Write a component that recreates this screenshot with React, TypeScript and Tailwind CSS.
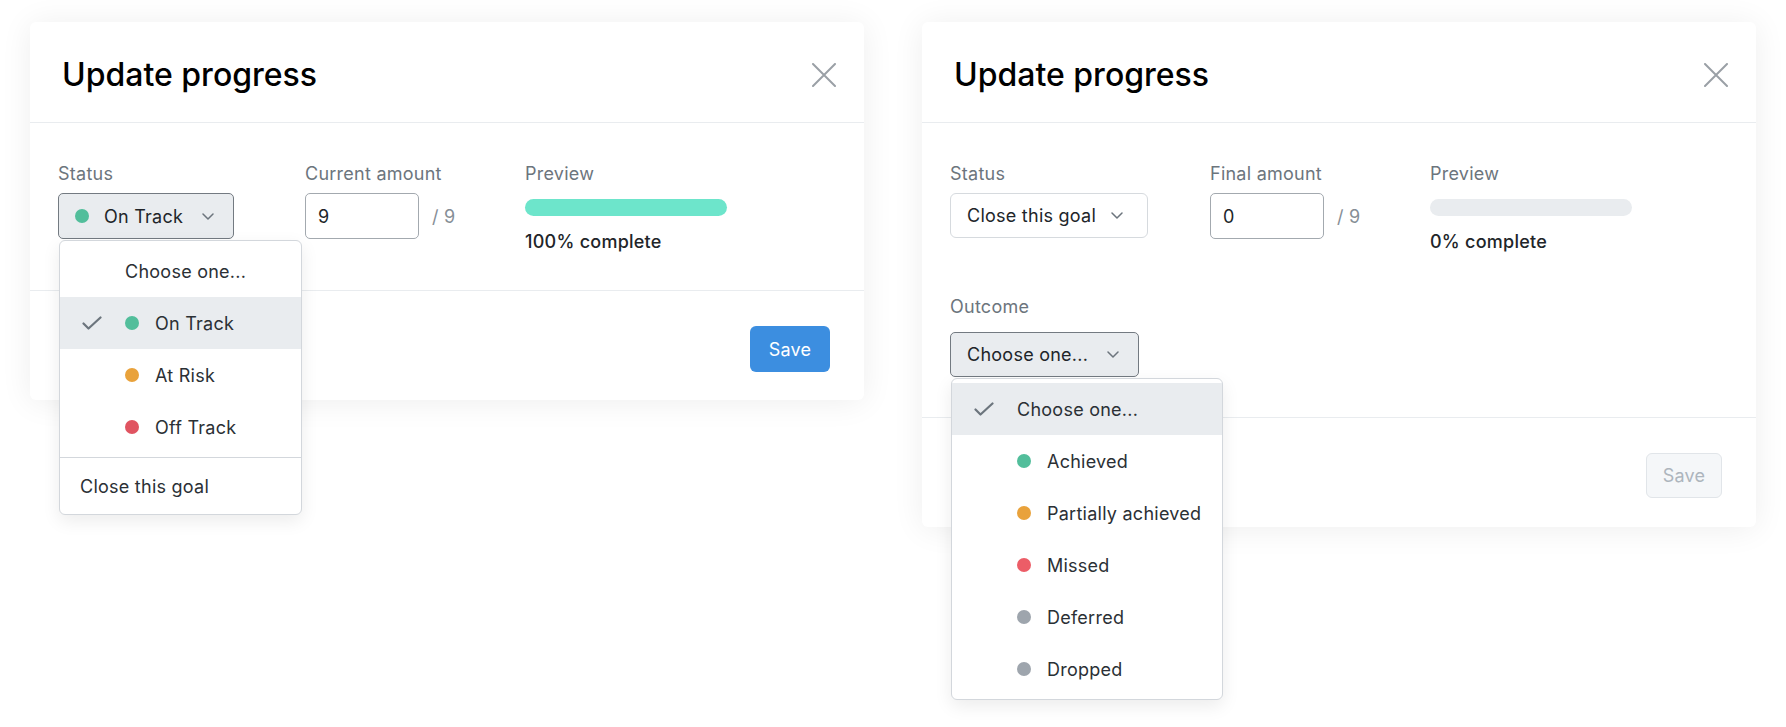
import React from 'react';

const font = { fontFamily: 'Inter, "Noto Sans", sans-serif' };

const Chevron = () => (
  <svg width="12" height="7" viewBox="0 0 12 7" fill="none">
    <path d="M1 1L6 6L11 1" stroke="#6c757d" strokeWidth="1.5" strokeLinecap="round" strokeLinejoin="round" />
  </svg>
);

const Check = () => (
  <svg width="20" height="14" viewBox="0 0 20 14" fill="none">
    <path d="M1.5 7.5L6.5 12.5L18.5 1.5" stroke="#6c757d" strokeWidth="2.2" strokeLinecap="round" strokeLinejoin="round" />
  </svg>
);

const CloseIcon = () => (
  <svg width="24" height="24" viewBox="0 0 24 24" fill="none">
    <path d="M1 1L23 23M23 1L1 23" stroke="#9aa0a6" strokeWidth="2" strokeLinecap="round" />
  </svg>
);

const Dot = ({ color }: { color: string }) => (
  <span className={`inline-block w-[14px] h-[14px] rounded-full shrink-0 ${color}`} />
);

interface ItemProps {
  label: string;
  dot?: string;
  checked?: boolean;
}

const MenuItem: React.FC<ItemProps> = ({ label, dot, checked }) => (
  <div className={`flex items-center h-[52px] ${checked ? 'bg-[#e9ecef]' : ''}`}>
    <div className="w-[65px] pl-[22px] flex items-center">{checked && <Check />}</div>
    {dot && <Dot color={dot} />}
    <span className={`text-[18px] text-[#2b3035] whitespace-nowrap ${dot ? 'ml-[16px]' : ''}`}>{label}</span>
  </div>
);

const Label = ({ children }: { children: React.ReactNode }) => (
  <div className="text-[18px] leading-[27px] text-[#6c757d]">{children}</div>
);

const Header = () => (
  <div className="h-[101px] flex items-center justify-between pt-[5px] pl-[32px] pr-[28px] border-b border-[#e9ecef]">
    <h2 className="text-[32px] font-medium text-black tracking-[0px]">Update progress</h2>
    <CloseIcon />
  </div>
);

const AmountCol = ({ label, value }: { label: string; value: string }) => (
  <div className="w-[220px] shrink-0">
    <Label>{label}</Label>
    <div className="mt-[6px] flex items-center">
      <div className="w-[114px] h-[46px] border border-[#a3a9af] rounded-[5px] flex items-center pl-[12px] text-[18px] text-[#212529]">
        {value}
      </div>
      <span className="ml-[13px] text-[18px] text-[#868e96]">/ 9</span>
    </div>
  </div>
);

const PreviewCol = ({ full }: { full: boolean }) => (
  <div>
    <Label>Preview</Label>
    <div className={`mt-[12px] w-[202px] h-[17px] rounded-full ${full ? 'bg-[#6de5cb]' : 'bg-[#e9ecef]'}`} />
    <div className="mt-[12px] text-[18px] leading-[27px] font-medium text-[#212529]">
      {full ? '100% complete' : '0% complete'}
    </div>
  </div>
);

export default function App() {
  return (
    <div className="w-full h-[727px] bg-white flex items-start gap-[58px] pl-[30px] pt-[22px] tracking-[0.25px]" style={font}>
      {/* left card */}
      <div className="relative w-[834px] bg-white rounded-[6px] shadow-[0_2px_32px_rgba(0,0,0,0.07)]">
        <Header />
        <div className="pl-[28px] pt-[37px] pb-[35px]">
          <div className="flex items-start">
            <div className="w-[247px] shrink-0">
              <Label>Status</Label>
              <div className="relative mt-[6px]">
                <div className="w-[176px] h-[46px] bg-[#e9ecef] border border-[#737a81] rounded-[5px] flex items-center justify-between pl-[16px] pr-[19px]">
                  <div className="flex items-center">
                    <Dot color="bg-[#52be9b]" />
                    <span className="ml-[15px] text-[18px] text-[#212529]">On Track</span>
                  </div>
                  <Chevron />
                </div>
                <div className="absolute z-10 left-[1px] top-[calc(100%+1px)] w-[243px] bg-white border border-[#d3d7dc] rounded-[6px] shadow-[0_6px_18px_rgba(0,0,0,0.08)]">
                  <div className="py-[4px]">
                    <div className="flex items-center h-[52px] pl-[65px]">
                      <span className="text-[18px] text-[#2b3035]">Choose one...</span>
                    </div>
                    <MenuItem label="On Track" dot="bg-[#52be9b]" checked />
                    <MenuItem label="At Risk" dot="bg-[#e9a23b]" />
                    <MenuItem label="Off Track" dot="bg-[#e05461]" />
                  </div>
                  <div className="border-t border-[#d3d7dc] py-[2px]">
                    <div className="flex items-center h-[52px] pl-[20px]">
                      <span className="text-[18px] text-[#2b3035]">Close this goal</span>
                    </div>
                  </div>
                </div>
              </div>
            </div>
            <AmountCol label="Current amount" value="9" />
            <PreviewCol full />
          </div>
        </div>
        <div className="h-[110px] border-t border-[#e9ecef] flex justify-end items-start pt-[35px] pr-[34px]">
          <button className="w-[80px] h-[46px] rounded-[6px] bg-[#3c8ee0] text-white text-[18px]">Save</button>
        </div>
      </div>

      {/* right card */}
      <div className="relative w-[834px] bg-white rounded-[6px] shadow-[0_2px_32px_rgba(0,0,0,0.07)]">
        <Header />
        <div className="pl-[28px] pt-[37px] pb-[40px]">
          <div className="flex items-start">
            <div className="w-[260px] shrink-0">
              <Label>Status</Label>
              <div className="mt-[6px] w-[198px] h-[45px] bg-white border border-[#d6dade] rounded-[6px] flex items-center justify-between pl-[16px] pr-[24px]">
                <span className="text-[18px] text-[#212529]">Close this goal</span>
                <Chevron />
              </div>
            </div>
            <AmountCol label="Final amount" value="0" />
            <PreviewCol full={false} />
          </div>
          <div className="mt-[38px]">
            <Label>Outcome</Label>
            <div className="relative mt-[12px]">
              <div className="w-[189px] h-[45px] bg-[#e9ecef] border border-[#737a81] rounded-[5px] flex items-center justify-between pl-[16px] pr-[19px]">
                <span className="text-[18px] text-[#212529]">Choose one...</span>
                <Chevron />
              </div>
              <div className="absolute z-10 left-[1px] top-[calc(100%+1px)] w-[272px] bg-white border border-[#d3d7dc] rounded-[6px] shadow-[0_6px_18px_rgba(0,0,0,0.08)] py-[4px]">
                <MenuItem label="Choose one..." checked />
                <MenuItem label="Achieved" dot="bg-[#52be9b]" />
                <MenuItem label="Partially achieved" dot="bg-[#e9a23b]" />
                <MenuItem label="Missed" dot="bg-[#ec5d67]" />
                <MenuItem label="Deferred" dot="bg-[#9ea5ad]" />
                <MenuItem label="Dropped" dot="bg-[#9ea5ad]" />
              </div>
            </div>
          </div>
        </div>
        <div className="h-[110px] border-t border-[#e9ecef] flex justify-end items-start pt-[35px] pr-[34px]">
          <button className="w-[76px] h-[45px] rounded-[6px] bg-[#f5f7f9] border border-[#e1e5e9] text-[#adb5bd] text-[18px]">Save</button>
        </div>
      </div>
    </div>
  );
}
